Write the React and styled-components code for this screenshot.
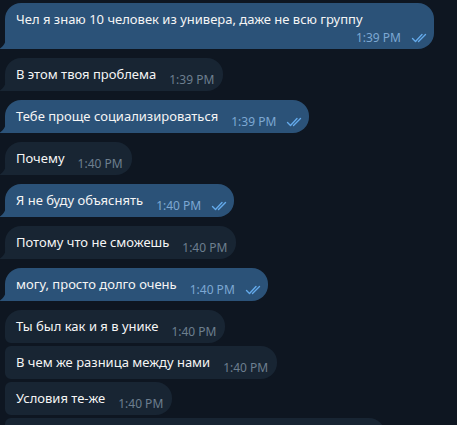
import React from 'react';
import styled, { createGlobalStyle } from 'styled-components';

const GlobalStyle = createGlobalStyle`
	html, body {
		margin: 0;
		padding: 0;
		background: #0e1621;
		overflow: hidden;
	}
`;

const Chat = styled.div`
	width: 457px;
	height: 425px;
	box-sizing: border-box;
	padding: 3px 0 0 5px;
	display: flex;
	flex-direction: column;
	align-items: flex-start;
	background: #0e1621;
	font-family: "Noto Sans", "Open Sans", sans-serif;
	overflow: hidden;
`;

const Bubble = styled.div`
	position: relative;
	box-sizing: border-box;
	max-width: 429px;
	margin-top: ${p => (p.$first ? 0 : p.$grouped ? 3 : 9)}px;
	padding: 7px ${p => (p.$out ? 6 : 9)}px 5px 11px;
	display: flex;
	flex-wrap: wrap;
	align-items: flex-end;
	justify-content: flex-end;
	background: ${p => (p.$out ? '#2b5278' : '#182533')};
	border-radius: ${p => (p.$topSmall ? 6 : 16)}px 16px 16px ${p => (p.$tail ? 0 : 6)}px;
	flex-shrink: 0;
`;

const Text = styled.span`
	flex: 1 0 auto;
	color: #f5f5f5;
	font-size: 13px;
	line-height: 18px;
	margin-bottom: 3px;
	white-space: nowrap;
`;

const Meta = styled.span`
	display: flex;
	align-items: center;
	margin-left: 13px;
	font-size: 12px;
	line-height: 13px;
	color: ${p => (p.$out ? '#7da8d3' : '#6d7f8f')};
`;

const Checks = styled.svg`
	width: 17px;
	height: 10px;
	margin-left: 10px;
`;

const Tail = styled.svg`
	position: absolute;
	left: -6px;
	bottom: 0;
	width: 7px;
	height: 12px;
`;

const messages = [
	{ text: 'Чел я знаю 10 человек из универа, даже не всю группу', time: '1:39 PM', out: true },
	{ text: 'В этом твоя проблема', time: '1:39 PM' },
	{ text: 'Тебе проще социализироваться', time: '1:39 PM', out: true },
	{ text: 'Почему', time: '1:40 PM' },
	{ text: 'Я не буду объяснять', time: '1:40 PM', out: true },
	{ text: 'Потому что не сможешь', time: '1:40 PM' },
	{ text: 'могу, просто долго очень', time: '1:40 PM', out: true },
	{ text: 'Ты был как и я в унике', time: '1:40 PM', group: 'first' },
	{ text: 'В чем же разница между нами', time: '1:40 PM', group: 'mid' },
	{ text: 'Условия те-же', time: '1:40 PM', group: 'mid' },
	{ text: 'Просто ты сам не хочешь ни с кем знакомиться', time: '1:41 PM', group: 'mid' },
];

const DoubleCheck = () => (
	<Checks viewBox="0 0 17 10" fill="none" stroke="#64aaeb" strokeWidth="1.4" strokeLinecap="round" strokeLinejoin="round">
		<path d="M1.5 5.5 L4.5 8.5 L11 1.5" />
		<path d="M7.5 8.5 L14.5 1.5" />
	</Checks>
);

const App = () => {
	return (
		<>
			<GlobalStyle />
			<Chat>
				{messages.map((m, i) => {
					const grouped = m.group === 'mid';
					const tail = !m.group;
					return (
						<Bubble
							key={i}
							$out={m.out}
							$first={i === 0}
							$grouped={grouped}
							$tail={tail}
							$topSmall={grouped}
						>
							{tail && (
								<Tail viewBox="0 0 7 12">
									<path d="M7 0 C7 6 4 10 0 12 L7 12 Z" fill={m.out ? '#2b5278' : '#182533'} />
								</Tail>
							)}
							<Text>{m.text}</Text>
							<Meta $out={m.out}>
								{m.time}
								{m.out && <DoubleCheck />}
							</Meta>
						</Bubble>
					);
				})}
			</Chat>
		</>
	);
};

export default App;
